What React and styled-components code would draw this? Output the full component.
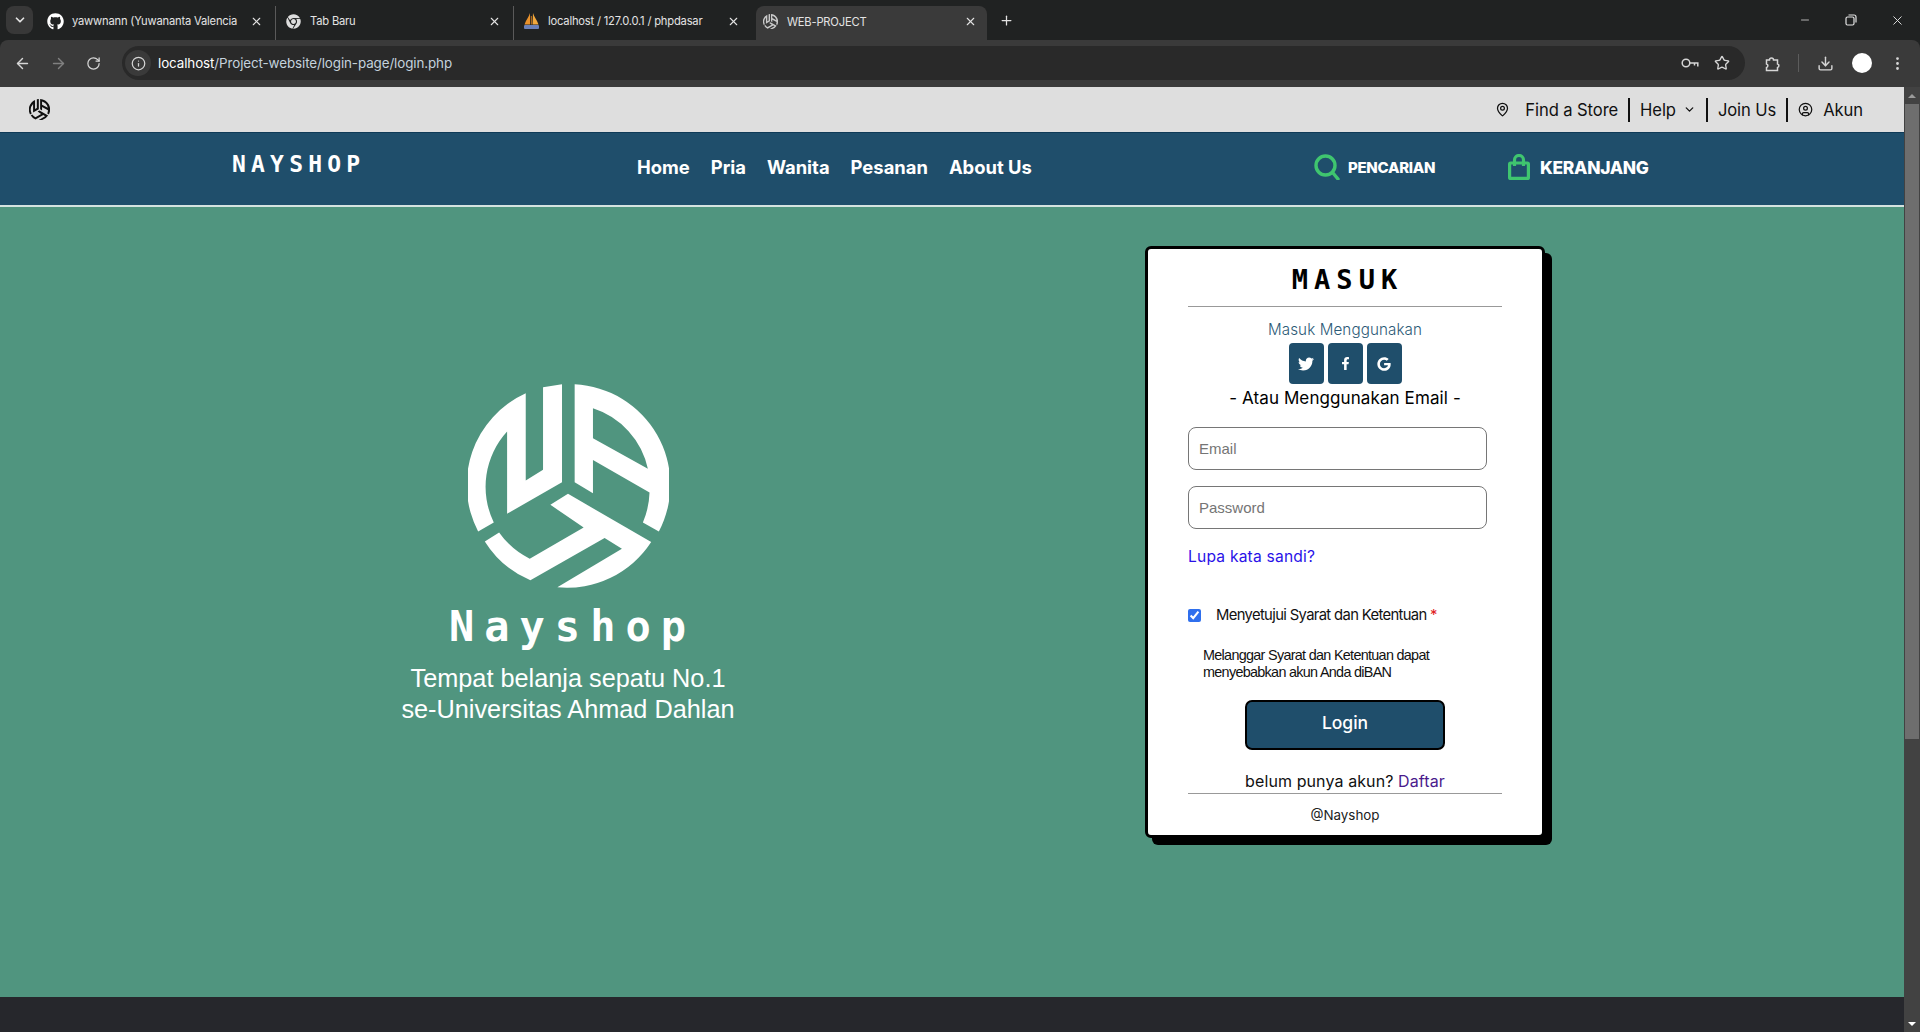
import styled, { createGlobalStyle } from "styled-components";
import {
    ArrowLeft,
    ArrowRight,
    ChevronDown,
    CircleUser,
    Download,
    EllipsisVertical,
    Info,
    MapPin,
    Minus,
    Plus,
    RotateCw,
    Star,
    X,
} from "lucide-react";
import { FaChrome, FaFacebookF, FaGithub, FaGoogle, FaTwitter } from "react-icons/fa";

const GlobalStyle = createGlobalStyle`
    html, body {
        margin: 0;
        padding: 0;
        height: 100%;
        overflow: hidden;
        font-family: "Inter", "Liberation Sans", sans-serif;
    }
    * {
        box-sizing: border-box;
    }
`;

function NayLogo({ size, color }) {
    return (
        <svg width={size} height={size * 1.015} viewBox="265 72 603 613" fill={color}>
            <path d="M438 100A302 302 0 0 0 295 515L342 488A245 245 0 0 1 382 215L382 462L547 367L547 73L490 82L490 330L438 362Z" />
            <path
                fillRule="evenodd"
                d="M585 73A302 302 0 0 1 838 515L790 488A245 245 0 0 0 810 398L640 300L640 400L585 367ZM640 145A245 245 0 0 1 805 327L640 235Z"
            />
            <path d="M565 402L815 547A302 302 0 0 1 533 683L727 567L675 535L452 662A302 302 0 0 1 315 545L358 518A245 245 0 0 0 450 597L612 503L512 435Z" />
        </svg>
    );
}

function SailIcon() {
    return (
        <svg width="17" height="18" viewBox="0 0 17 18">
            <path d="M7 1C6 5 3 8 1.5 12.5h5.5z" fill="#e8912c" />
            <path d="M10 1c1 4 4 7 5.5 11.5H9.500z" fill="#f2a83c" />
            <path d="M7.800 4v8.500h1V4z" fill="#c9761c" />
            <rect x="1" y="13" width="15" height="4" rx="1" fill="#6a80b8" />
        </svg>
    );
}

function RestoreIcon() {
    return (
        <svg width="12" height="12" viewBox="0 0 12 12" fill="none" stroke="#e3e3e3" strokeWidth="1.2">
            <rect x="1" y="3" width="8" height="8" rx="1.500" />
            <path d="M3.500 1h5.500a2 2 0 0 1 2 2v5.500" />
        </svg>
    );
}

function KeyIcon() {
    return (
        <svg width="18" height="12" viewBox="0 0 18 12" fill="none" stroke="#d6d6d6" strokeWidth="1.5">
            <circle cx="5" cy="6" r="3.800" />
            <path d="M8.800 6h8v3.500M13.500 6v2.500" />
        </svg>
    );
}

function ExtensionIcon() {
    return (
        <svg width="17" height="17" viewBox="0 0 17 17" fill="none" stroke="#d6d6d6" strokeWidth="1.5">
            <path d="M2.500 5h3a2 2 0 0 1 4 0h4v4a1.800 1.800 0 0 1 0 3.500v3h-11v-3a1.800 1.800 0 0 0 0-3.500z" />
        </svg>
    );
}

function SearchIcon() {
    return (
        <svg width="26" height="26" viewBox="0 0 26 26" fill="none" stroke="#3fc56f" strokeWidth="3.4">
            <circle cx="11.5" cy="11.5" r="9.5" />
            <path d="M19 19l5 6" strokeLinecap="round" />
        </svg>
    );
}

function BagIcon() {
    return (
        <svg width="22" height="26" viewBox="0 0 22 26" fill="none" stroke="#3fc56f" strokeWidth="3.2">
            <rect x="1.6" y="9" width="18.8" height="15.4" rx="1" />
            <path d="M6.500 12V6a4.500 4.500 0 0 1 9 0v6" />
        </svg>
    );
}

const tabs = [
    { icon: <FaGithub size={17} color="#fff" />, title: "yawwnann (Yuwananta Valencia" },
    { icon: <FaChrome size={15} color="#ddd" />, title: "Tab Baru" },
    { icon: <SailIcon />, title: "localhost / 127.0.0.1 / phpdasar" },
];

export default function App() {
    return (
        <Screen>
            <GlobalStyle />
            <TabStrip>
                <TabMenu>
                    <ChevronDown size={14} strokeWidth={3} />
                </TabMenu>
                {tabs.map((tab, i) => (
                    <Tab key={tab.title} $last={i === 2}>
                        <Favicon>{tab.icon}</Favicon>
                        <TabTitle>{tab.title}</TabTitle>
                        <X size={13} strokeWidth={2} />
                    </Tab>
                ))}
                <ActiveTab>
                    <Favicon>
                        <NayLogo size={15} color="#c9c9c9" />
                    </Favicon>
                    <TabTitle>WEB-PROJECT</TabTitle>
                    <X size={13} strokeWidth={2} />
                </ActiveTab>
                <NewTab>
                    <Plus size={15} strokeWidth={2} />
                </NewTab>
                <WindowControls>
                    <Minus size={12} strokeWidth={1.5} />
                    <RestoreIcon />
                    <X size={15} strokeWidth={1.5} />
                </WindowControls>
            </TabStrip>

            <Toolbar>
                <ToolIcons>
                    <ArrowLeft size={17} />
                    <FadedIcon>
                        <ArrowRight size={17} />
                    </FadedIcon>
                    <RotateCw size={15} />
                </ToolIcons>
                <AddressBar>
                    <InfoBadge>
                        <Info size={15} />
                    </InfoBadge>
                    <Url>
                        localhost<UrlPath>/Project-website/login-page/login.php</UrlPath>
                    </Url>
                    <AddressEnd>
                        <KeyIcon />
                        <Star size={16} />
                    </AddressEnd>
                </AddressBar>
                <ToolEnd>
                    <ExtensionIcon />
                    <ToolDivider />
                    <Download size={17} />
                    <Avatar />
                    <EllipsisVertical size={17} />
                </ToolEnd>
            </Toolbar>

            <Viewport>
                <Page>
                    <TopBar>
                        <NayLogo size={21} color="#111" />
                        <TopLinks>
                            <TopLink>
                                <TopIcon $gap={15}>
                                    <MapPin size={15} />
                                </TopIcon>
                                Find a Store
                            </TopLink>
                            <TopLink $divided>
                                Help
                                <TopChevron>
                                    <ChevronDown size={13} strokeWidth={2.4} />
                                </TopChevron>
                            </TopLink>
                            <TopLink $divided>Join Us</TopLink>
                            <TopLink $divided>
                                <TopIcon $gap={10}>
                                    <CircleUser size={15} />
                                </TopIcon>
                                Akun
                            </TopLink>
                        </TopLinks>
                    </TopBar>

                    <NavBar>
                        <Brand>NAYSHOP</Brand>
                        <NavLinks>
                            <NavLink>Home</NavLink>
                            <NavLink>Pria</NavLink>
                            <NavLink>Wanita</NavLink>
                            <NavLink>Pesanan</NavLink>
                            <NavLink>About Us</NavLink>
                        </NavLinks>
                        <NavAction $width={194} $gap={8}>
                            <SearchIcon />
                            <ActionLabel $small>PENCARIAN</ActionLabel>
                        </NavAction>
                        <NavAction $gap={10}>
                            <BagIcon />
                            <ActionLabel>KERANJANG</ActionLabel>
                        </NavAction>
                    </NavBar>

                    <Main>
                        <Hero>
                            <NayLogo size={201} color="#fff" />
                            <HeroName>Nayshop</HeroName>
                            <HeroText>
                                Tempat belanja sepatu No.1
                                <br />
                                se-Universitas Ahmad Dahlan
                            </HeroText>
                        </Hero>

                        <Card>
                            <CardTitle>MASUK</CardTitle>
                            <Rule />
                            <SocialLabel>Masuk Menggunakan</SocialLabel>
                            <SocialRow>
                                <SocialButton>
                                    <FaTwitter size={16} />
                                </SocialButton>
                                <SocialButton>
                                    <FaFacebookF size={13} />
                                </SocialButton>
                                <SocialButton>
                                    <FaGoogle size={14} />
                                </SocialButton>
                            </SocialRow>
                            <OrLabel>- Atau Menggunakan Email -</OrLabel>
                            <Field type="email" placeholder="Email" />
                            <Field type="password" placeholder="Password" />
                            <ForgotLink>Lupa kata sandi?</ForgotLink>
                            <TermsRow>
                                <TermsCheck type="checkbox" defaultChecked />
                                <TermsLabel>
                                    Menyetujui Syarat dan Ketentuan <Required>*</Required>
                                </TermsLabel>
                            </TermsRow>
                            <Warning>
                                Melanggar Syarat dan Ketentuan dapat
                                <br />
                                menyebabkan akun Anda diBAN
                            </Warning>
                            <LoginButton>Login</LoginButton>
                            <SignupText>
                                belum punya akun? <SignupLink>Daftar</SignupLink>
                            </SignupText>
                            <Rule />
                            <CardFoot>@Nayshop</CardFoot>
                        </Card>
                    </Main>

                    <Footer />
                </Page>
                <Scrollbar>
                    <ScrollArrow $up />
                    <ScrollThumb />
                    <ScrollTrack />
                    <ScrollArrow />
                </Scrollbar>
            </Viewport>
        </Screen>
    );
}

const Screen = styled.div`
    width: 1920px;
    height: 1032px;
    display: flex;
    flex-direction: column;
    overflow: hidden;
    background: #202222;
`;

const TabStrip = styled.div`
    height: 40px;
    display: flex;
    align-items: flex-end;
    padding-left: 6px;
    color: #e3e3e3;
    background: #202222;
`;

const TabMenu = styled.div`
    width: 27px;
    height: 28px;
    margin: 0 5px 6px 0;
    border-radius: 8px;
    background: #383838;
    display: flex;
    align-items: center;
    justify-content: center;
`;

const Tab = styled.div`
    width: 238px;
    height: 34px;
    padding: 0 12px 4px 8px;
    display: flex;
    align-items: center;
    font-size: 11.2px;
    border-right: ${(p) => (p.$last ? "none" : "1px solid #5a5a5a")};
    background-clip: padding-box;
`;

const ActiveTab = styled(Tab)`
    width: 231px;
    margin-left: 4px;
    padding: 0 10px 3px 5px;
    border: none;
    border-radius: 8px 8px 0 0;
    background: #3a3a3a;
`;

const Favicon = styled.span`
    width: 18px;
    margin-right: 8px;
    flex: none;
    display: flex;
    align-items: center;
    justify-content: center;
`;

const TabTitle = styled.span`
    flex: 1;
    margin-right: 6px;
    white-space: nowrap;
    letter-spacing: -0.2px;
`;

const NewTab = styled.div`
    width: 38px;
    height: 34px;
    padding-bottom: 6px;
    display: flex;
    align-items: center;
    justify-content: center;
`;

const WindowControls = styled.div`
    margin-left: auto;
    width: 132px;
    height: 40px;
    padding: 0 15px 0 11px;
    display: flex;
    align-items: center;
    justify-content: space-between;
`;

const Toolbar = styled.div`
    height: 47px;
    padding: 6px 0 7px 14px;
    display: flex;
    align-items: center;
    color: #d6d6d6;
    background: #3a3a3a;
    border-radius: 8px 8px 0 0;
`;

const ToolIcons = styled.div`
    width: 108px;
    display: flex;
    align-items: center;
    gap: 19px;
`;

const FadedIcon = styled.span`
    display: flex;
    opacity: 0.45;
`;

const AddressBar = styled.div`
    width: 1623px;
    height: 34px;
    padding: 0 15px 0 3px;
    display: flex;
    align-items: center;
    gap: 7px;
    border-radius: 17px;
    background: #292929;
`;

const InfoBadge = styled.span`
    width: 26px;
    height: 26px;
    display: flex;
    align-items: center;
    justify-content: center;
    border-radius: 50%;
    background: #3a3a3a;
`;

const Url = styled.span`
    color: #fff;
    font-size: 13.4px;
    letter-spacing: -0.1px;
`;

const UrlPath = styled.span`
    color: #c4d2dd;
`;

const AddressEnd = styled.div`
    margin-left: auto;
    display: flex;
    align-items: center;
    gap: 15px;
`;

const ToolEnd = styled.div`
    flex: 1;
    padding: 0 13px 0 19px;
    display: flex;
    align-items: center;
    gap: 17px;
`;

const ToolDivider = styled.span`
    width: 1px;
    height: 18px;
    margin-right: 1px;
    background: #5c5c5c;
`;

const Avatar = styled.span`
    width: 20px;
    height: 20px;
    margin-left: 1px;
    border-radius: 50%;
    background: #fff;
`;

const Viewport = styled.div`
    flex: 1;
    min-height: 0;
    display: flex;
`;

const Page = styled.div`
    width: 1904px;
    display: flex;
    flex-direction: column;
`;

const TopBar = styled.div`
    height: 46px;
    padding: 0 31px 0 29px;
    display: flex;
    align-items: center;
    justify-content: space-between;
    background: #dedede;
    border-bottom: 1px solid #0f3a57;
`;

const TopLinks = styled.div`
    display: flex;
    align-items: center;
    color: #111;
    font-size: 16.6px;
    letter-spacing: -0.1px;
`;

const TopLink = styled.div`
    height: 24px;
    display: flex;
    align-items: center;
    padding: 0 10px;
    border-left: ${(p) => (p.$divided ? "2px solid #111" : "none")};
`;

const TopIcon = styled.span`
    display: flex;
    margin-right: ${(p) => p.$gap}px;
`;

const TopChevron = styled.span`
    display: flex;
    margin-left: 7px;
`;

const NavBar = styled.nav`
    height: 74px;
    padding: 0 0 4px 232px;
    display: flex;
    align-items: center;
    color: #fff;
    background: #1f4e6b;
    border-bottom: 2px solid #d5e3e0;
`;

const Brand = styled.div`
    width: 405px;
    margin-top: -6px;
    font-family: "DejaVu Sans Mono", monospace;
    font-size: 23px;
    font-weight: 700;
    letter-spacing: 5.2px;
`;

const NavLinks = styled.div`
    width: 677px;
    display: flex;
    gap: 21px;
`;

const NavLink = styled.a`
    font-size: 18.4px;
    font-weight: 700;
    letter-spacing: 0;
`;

const NavAction = styled.div`
    width: ${(p) => (p.$width ? `${p.$width}px` : "auto")};
    display: flex;
    align-items: center;
    gap: ${(p) => p.$gap}px;
`;

const ActionLabel = styled.span`
    font-size: ${(p) => (p.$small ? "15px" : "17.4px")};
    font-weight: 800;
    letter-spacing: -0.3px;
`;

const Main = styled.main`
    flex: 1;
    display: flex;
    align-items: flex-start;
    padding: 39px 0 0;
    background: #50957f;
`;

const Hero = styled.section`
    width: 1136px;
    margin: 138px 9px 0 0;
    display: flex;
    flex-direction: column;
    align-items: center;
    color: #fff;
`;

const HeroName = styled.div`
    margin-top: 16px;
    height: 46px;
    padding-left: 9px;
    font-family: "DejaVu Sans Mono", monospace;
    font-size: 42px;
    line-height: 46px;
    font-weight: 700;
    letter-spacing: 10px;
`;

const HeroText = styled.p`
    margin: 13px 0 0;
    font-family: "Liberation Sans", sans-serif;
    font-size: 25.3px;
    line-height: 31px;
    text-align: center;
`;

const Card = styled.section`
    width: 400px;
    height: 592px;
    padding: 11px 40px 0;
    display: flex;
    flex-direction: column;
    background: #fff;
    border: 3px solid #000;
    border-radius: 6px;
    box-shadow: 7px 7px 0 #000;
`;

const CardTitle = styled.h1`
    margin: 0 0 6px;
    padding-left: 5px;
    font-family: "DejaVu Sans Mono", monospace;
    font-size: 27px;
    line-height: 40px;
    font-weight: 700;
    letter-spacing: 6px;
    text-align: center;
    color: #000;
`;

const Rule = styled.hr`
    width: 100%;
    height: 1px;
    margin: 0;
    flex: none;
    border: none;
    background: #999;
`;

const SocialLabel = styled.div`
    margin-top: 11px;
    font-size: 15.2px;
    line-height: 24px;
    font-weight: 300;
    letter-spacing: 0.1px;
    text-align: center;
    color: #2c5a76;
`;

const SocialRow = styled.div`
    margin-top: 1px;
    display: flex;
    justify-content: center;
    gap: 4px;
`;

const SocialButton = styled.a`
    width: 35px;
    height: 41px;
    display: flex;
    align-items: center;
    justify-content: center;
    color: #fff;
    background: #1f4e6b;
    border-radius: 4px;
`;

const OrLabel = styled.div`
    margin: 1px 0 16px;
    font-size: 17px;
    line-height: 26px;
    letter-spacing: 0.1px;
    text-align: center;
    color: #000;
`;

const Field = styled.input`
    width: 299px;
    height: 43px;
    flex: none;
    margin-bottom: 16px;
    padding: 0 10px;
    font-family: "Liberation Sans", sans-serif;
    font-size: 15px;
    background: #fff;
    border: 1px solid #767676;
    border-radius: 8px;

    &::placeholder {
        color: #757575;
    }
`;

const ForgotLink = styled.a`
    font-size: 15.6px;
    line-height: 24px;
    letter-spacing: 0.2px;
    color: #2a12e8;
`;

const TermsRow = styled.div`
    margin-top: 34px;
    height: 24px;
    display: flex;
    align-items: center;
`;

const TermsCheck = styled.input`
    width: 13px;
    height: 13px;
    margin: 0 15px 0 0;
    accent-color: #2f6fed;
`;

const TermsLabel = styled.label`
    font-size: 14.8px;
    letter-spacing: -0.65px;
    color: #111;
`;

const Required = styled.span`
    color: #e02020;
`;

const Warning = styled.p`
    margin: 20px 0 0 15px;
    font-family: "Liberation Sans", sans-serif;
    font-size: 14.4px;
    line-height: 17px;
    letter-spacing: -0.7px;
    color: #111;
`;

const LoginButton = styled.button`
    width: 200px;
    height: 50px;
    flex: none;
    margin: 19px 0 0 57px;
    padding-bottom: 7px;
    font-family: "Inter", sans-serif;
    font-size: 17.5px;
    font-weight: 500;
    color: #fff;
    background: #1f4e6b;
    border: 2px solid #000;
    border-radius: 7px;
`;

const SignupText = styled.div`
    margin-top: 20px;
    font-size: 16px;
    line-height: 23px;
    letter-spacing: 0.1px;
    text-align: center;
    color: #111;
`;

const SignupLink = styled.a`
    color: #4a1a8c;
`;

const CardFoot = styled.div`
    margin-top: 11px;
    font-size: 13.4px;
    line-height: 20px;
    text-align: center;
    color: #222;
`;

const Footer = styled.footer`
    height: 35px;
    background: #26272c;
`;

const Scrollbar = styled.div`
    width: 16px;
    display: flex;
    flex-direction: column;
    align-items: center;
    background: #424242;
`;

const ScrollArrow = styled.div`
    width: 0;
    height: 0;
    margin: 7px 0 6px;
    border-left: 4px solid transparent;
    border-right: 4px solid transparent;
    ${(p) => (p.$up ? "border-bottom: 4px solid #9a9a9a;" : "border-top: 4px solid #fff;")}
`;

const ScrollThumb = styled.div`
    width: 14px;
    height: 635px;
    background: #6e6e6e;
`;

const ScrollTrack = styled.div`
    flex: 1;
`;
